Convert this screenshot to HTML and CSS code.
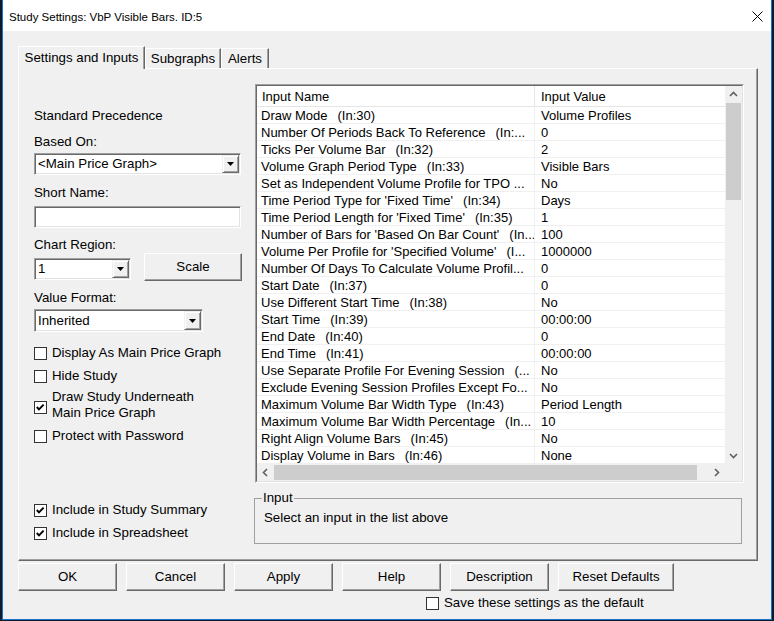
FILE: index.html
```html
<!DOCTYPE html>
<html>
<head>
<meta charset="utf-8">
<title>Study Settings</title>
<link rel="stylesheet" href="styles.css">
</head>
<body>
<div class="window">
  <div class="titlebar">
    <span class="title">Study Settings: VbP Visible Bars. ID:5</span>
    <svg class="close" width="11" height="11" viewBox="0 0 11 11"><path d="M0.5 0.5 L10.5 10.5 M10.5 0.5 L0.5 10.5" stroke="#000" stroke-width="1" fill="none"/></svg>
  </div>
  <div class="client">
    <div class="tabs">
      <div class="tab active">Settings and Inputs</div>
      <div class="tab tab-sub">Subgraphs</div>
      <div class="tab tab-alerts">Alerts</div>
    </div>
    <div class="panel">
      <div class="leftcol">
        <div class="lbl">Standard Precedence</div>
        <div class="lbl after-block">Based On:</div>
        <div class="combo combo-based after-label">
          <span class="combo-text">&lt;Main Price Graph&gt;</span>
          <span class="dropbtn"><svg width="7" height="4" viewBox="0 0 7 4"><path d="M0 0 H7 L3.5 4 Z" fill="#000"/></svg></span>
        </div>
        <div class="lbl after-block">Short Name:</div>
        <div class="textbox after-label-5"></div>
        <div class="lbl after-block-9">Chart Region:</div>
        <div class="region-row">
          <div class="combo combo-region">
            <span class="combo-text">1</span>
            <span class="dropbtn"><svg width="7" height="4" viewBox="0 0 7 4"><path d="M0 0 H7 L3.5 4 Z" fill="#000"/></svg></span>
          </div>
          <div class="btn btn-scale">Scale</div>
        </div>
        <div class="lbl after-block-9">Value Format:</div>
        <div class="combo combo-format after-label">
          <span class="combo-text">Inherited</span>
          <span class="dropbtn"><svg width="7" height="4" viewBox="0 0 7 4"><path d="M0 0 H7 L3.5 4 Z" fill="#000"/></svg></span>
        </div>
        <div class="check cb-first"><span class="box"></span><span>Display As Main Price Graph</span></div>
        <div class="check cb-next"><span class="box"></span><span>Hide Study</span></div>
        <div class="check cb-two"><span class="box"><svg width="11" height="11" viewBox="0 0 11 11"><path d="M1.8 5 L4 7.4 L8.6 2.6" stroke="#000" stroke-width="1.9" fill="none"/></svg></span><span>Draw Study Underneath<br>Main Price Graph</span></div>
        <div class="check cb-next"><span class="box"></span><span>Protect with Password</span></div>
        <div class="check cb-bottom"><span class="box"><svg width="11" height="11" viewBox="0 0 11 11"><path d="M1.8 5 L4 7.4 L8.6 2.6" stroke="#000" stroke-width="1.9" fill="none"/></svg></span><span>Include in Study Summary</span></div>
        <div class="check cb-next"><span class="box"><svg width="11" height="11" viewBox="0 0 11 11"><path d="M1.8 5 L4 7.4 L8.6 2.6" stroke="#000" stroke-width="1.9" fill="none"/></svg></span><span>Include in Spreadsheet</span></div>
      </div>
      <div class="rightcol">
        <div class="list">
          <div class="list-inner">
            <div class="table">
              <div class="thead">
                <div class="th th-name">Input Name</div>
                <div class="th th-value">Input Value</div>
              </div>
              <div class="tr"><div class="td-name">Draw Mode<span class="id">(In:30)</span></div><div class="td-value">Volume Profiles</div></div>
              <div class="tr"><div class="td-name">Number Of Periods Back To Reference<span class="id">(In:...</span></div><div class="td-value">0</div></div>
              <div class="tr"><div class="td-name">Ticks Per Volume Bar<span class="id">(In:32)</span></div><div class="td-value">2</div></div>
              <div class="tr"><div class="td-name">Volume Graph Period Type<span class="id">(In:33)</span></div><div class="td-value">Visible Bars</div></div>
              <div class="tr"><div class="td-name">Set as Independent Volume Profile for TPO ...</div><div class="td-value">No</div></div>
              <div class="tr"><div class="td-name">Time Period Type for 'Fixed Time'<span class="id">(In:34)</span></div><div class="td-value">Days</div></div>
              <div class="tr"><div class="td-name">Time Period Length for 'Fixed Time'<span class="id">(In:35)</span></div><div class="td-value">1</div></div>
              <div class="tr"><div class="td-name">Number of Bars for 'Based On Bar Count'<span class="id">(In...</span></div><div class="td-value">100</div></div>
              <div class="tr"><div class="td-name">Volume Per Profile for 'Specified Volume'<span class="id">(I...</span></div><div class="td-value">1000000</div></div>
              <div class="tr"><div class="td-name">Number Of Days To Calculate Volume Profil...</div><div class="td-value">0</div></div>
              <div class="tr"><div class="td-name">Start Date<span class="id">(In:37)</span></div><div class="td-value">0</div></div>
              <div class="tr"><div class="td-name">Use Different Start Time<span class="id">(In:38)</span></div><div class="td-value">No</div></div>
              <div class="tr"><div class="td-name">Start Time<span class="id">(In:39)</span></div><div class="td-value">00:00:00</div></div>
              <div class="tr"><div class="td-name">End Date<span class="id">(In:40)</span></div><div class="td-value">0</div></div>
              <div class="tr"><div class="td-name">End Time<span class="id">(In:41)</span></div><div class="td-value">00:00:00</div></div>
              <div class="tr"><div class="td-name">Use Separate Profile For Evening Session<span class="id">(...</span></div><div class="td-value">No</div></div>
              <div class="tr"><div class="td-name">Exclude Evening Session Profiles Except Fo...</div><div class="td-value">No</div></div>
              <div class="tr"><div class="td-name">Maximum Volume Bar Width Type<span class="id">(In:43)</span></div><div class="td-value">Period Length</div></div>
              <div class="tr"><div class="td-name">Maximum Volume Bar Width Percentage<span class="id">(In...</span></div><div class="td-value">10</div></div>
              <div class="tr"><div class="td-name">Right Align Volume Bars<span class="id">(In:45)</span></div><div class="td-value">No</div></div>
              <div class="tr"><div class="td-name">Display Volume in Bars<span class="id">(In:46)</span></div><div class="td-value">None</div></div>
            </div>
            <div class="vscroll">
              <div class="arrow"><svg width="17" height="17" viewBox="0 0 17 17"><path d="M5 10 L8.5 6.5 L12 10" stroke="#606060" stroke-width="1.6" fill="none"/></svg></div>
              <div class="vthumb"></div>
              <div class="vtrack"></div>
              <div class="arrow"><svg width="17" height="17" viewBox="0 0 17 17"><path d="M5 7 L8.5 10.5 L12 7" stroke="#606060" stroke-width="1.6" fill="none"/></svg></div>
            </div>
            <div class="hscroll">
              <div class="arrow"><svg width="17" height="17" viewBox="0 0 17 17"><path d="M10 5 L6.5 8.5 L10 12" stroke="#606060" stroke-width="1.6" fill="none"/></svg></div>
              <div class="hthumb"></div>
              <div class="htrack"></div>
              <div class="arrow"><svg width="17" height="17" viewBox="0 0 17 17"><path d="M7 5 L10.5 8.5 L7 12" stroke="#606060" stroke-width="1.6" fill="none"/></svg></div>
            </div>
            <div class="corner"></div>
          </div>
        </div>
        <div class="group">
          <span class="legend">Input</span>
          <div class="group-text">Select an input in the list above</div>
        </div>
      </div>
    </div>
    <div class="buttons">
      <div class="btn btn-main">OK</div>
      <div class="btn btn-main">Cancel</div>
      <div class="btn btn-main">Apply</div>
      <div class="btn btn-main">Help</div>
      <div class="btn btn-main">Description</div>
      <div class="btn btn-main btn-wide">Reset Defaults</div>
    </div>
    <div class="check savedefault"><span class="box"></span><span>Save these settings as the default</span></div>
  </div>
</div>
</body>
</html>
```
FILE: styles.css
```css
* { box-sizing: border-box; }
html, body { margin: 0; padding: 0; }
body {
  background: #0d1b2e;
  width: 774px;
  height: 621px;
  overflow: hidden;
  font-family: "Liberation Sans", Arial, sans-serif;
  font-size: 13.3px;
  line-height: 16px;
  color: #000;
}
.window {
  margin-left: 2px;
  width: 770px;
  height: 620px;
  border: 1px solid #1a73c9;
  border-top: none;
  background: #f0f0f0;
}
.titlebar {
  height: 31px;
  background: #fff;
  display: flex;
  align-items: center;
  padding: 2px 0 0 6px;
  font-size: 11.5px;
}
.close { margin-left: auto; margin-right: 8px; }
.client { padding-left: 15px; }

/* tabs */
.tabs {
  margin-top: 15px;
  height: 23px;
  margin-bottom: -1px;
  display: flex;
  align-items: flex-end;
  position: relative;
  z-index: 1;
}
.tab {
  height: 20px;
  margin-bottom: 1px;
  padding-top: 2px;
  text-align: center;
  white-space: nowrap;
  background: #f0f0f0;
  border-top: 1px solid #fff;
  border-left: 1px solid #fff;
  border-right: 1px solid #696969;
  box-shadow: inset -1px 0 0 #a0a0a0;
}
.tab.active { width: 127px; height: 23px; margin-bottom: 0; padding-top: 3px; }
.tab-sub { width: 76px; }
.tab-alerts { width: 48px; }

.panel {
  width: 740px;
  height: 493px;
  border-top: 1px solid #fff;
  border-left: 1px solid #fff;
  border-right: 1px solid #696969;
  border-bottom: 1px solid #696969;
  box-shadow: inset -1px -1px 0 #a0a0a0;
  display: flex;
  align-items: flex-start;
  padding-left: 15px;
}

/* left column */
.leftcol { width: 221px; margin-top: 39px; }
.lbl { height: 16px; white-space: nowrap; }
.after-block { margin-top: 10px; }
.after-block-9 { margin-top: 9px; }
.after-label { margin-top: 3px; }
.after-label-5 { margin-top: 5px; }

.combo, .textbox {
  height: 22px;
  background: #fff;
  border: 1px solid;
  border-color: #a0a0a0 #fff #fff #a0a0a0;
  box-shadow: inset 1px 1px 0 #696969, inset -1px -1px 0 #e3e3e3;
  padding: 1px;
  display: flex;
  align-items: center;
}
.combo-based, .textbox { width: 207px; }
.combo-region { width: 97px; margin-top: 5px; }
.combo-format { width: 169px; height: 23px; }
.combo-text { flex: 1; padding-left: 2px; white-space: nowrap; }
.dropbtn {
  width: 17px;
  height: 100%;
  background: #f0f0f0;
  border: 1px solid;
  border-color: #f0f0f0 #696969 #696969 #f0f0f0;
  box-shadow: inset 1px 1px 0 #fff, inset -1px -1px 0 #a0a0a0;
  display: flex;
  align-items: center;
  justify-content: center;
}
.region-row { display: flex; align-items: flex-start; height: 28px; }

.btn {
  height: 28px;
  background: #f0f0f0;
  border: 1px solid;
  border-color: #fff #696969 #696969 #fff;
  box-shadow: inset -1px -1px 0 #a0a0a0;
  display: flex;
  align-items: center;
  justify-content: center;
  white-space: nowrap;
}
.btn-scale { width: 98px; margin-left: 13px; }

.check { display: flex; align-items: center; gap: 5px; white-space: nowrap; }
.box {
  width: 13px;
  height: 13px;
  flex-shrink: 0;
  background: #fff;
  border: 1px solid #333;
  display: flex;
  align-items: center;
  justify-content: center;
}
.cb-first { margin-top: 13px; }
.cb-next { margin-top: 7px; }
.cb-two { margin-top: 5px; }
.cb-two .box { margin-top: 4px; }
.cb-bottom { margin-top: 58px; }

/* right column */
.rightcol { width: 489px; margin-top: 15px; }
.list {
  width: 489px;
  height: 399px;
  border: 1px solid;
  border-color: #a0a0a0 #fff #fff #a0a0a0;
}
.list-inner {
  width: 100%;
  height: 100%;
  border: 1px solid;
  border-color: #696969 #e3e3e3 #e3e3e3 #696969;
  background: #fff;
  display: grid;
  grid-template-columns: 468px 17px;
  grid-template-rows: 378px 17px;
}
.table { overflow: hidden; font-size: 13px; }
.thead { display: flex; height: 21px; border-bottom: 1px solid #e5e5e5; }
.th { padding: 3px 0 0 5px; white-space: nowrap; }
.th-name { width: 278px; border-right: 1px solid #e5e5e5; }
.th-value { flex: 1; padding-left: 6px; }
.tr { display: flex; height: 17px; border-bottom: 1px solid #f0f0f0; }
.td-name {
  width: 278px;
  padding: 1px 0 0 4px;
  border-right: 1px solid #f0f0f0;
  white-space: nowrap;
  overflow: hidden;
}
.id { padding-left: 10px; }
.td-value { flex: 1; padding: 1px 0 0 6px; white-space: nowrap; }

.vscroll { background: #f0f0f0; display: flex; flex-direction: column; }
.arrow { width: 17px; height: 17px; flex-shrink: 0; }
.vthumb { height: 97px; margin: 0 1px; background: #cdcdcd; }
.vtrack { flex: 1; }
.hscroll { background: #f0f0f0; display: flex; }
.hthumb { width: 423px; margin: 1px 0; background: #cdcdcd; }
.htrack { flex: 1; }
.corner { background: #f0f0f0; }

.group {
  position: relative;
  width: 488px;
  height: 46px;
  margin-left: -1px;
  margin-top: 15px;
  border: 1px solid #a0a0a0;
  padding: 11px 0 0 9px;
}
.legend {
  position: absolute;
  left: 7px;
  top: -9px;
  padding: 0 1px;
  background: #f0f0f0;
}

/* bottom buttons */
.buttons { display: flex; gap: 9px; margin-top: 2px; }
.btn-main { width: 99px; }
.btn-wide { width: 116px; }
.savedefault { margin-top: 4px; margin-left: 408px; height: 16px; }
```
